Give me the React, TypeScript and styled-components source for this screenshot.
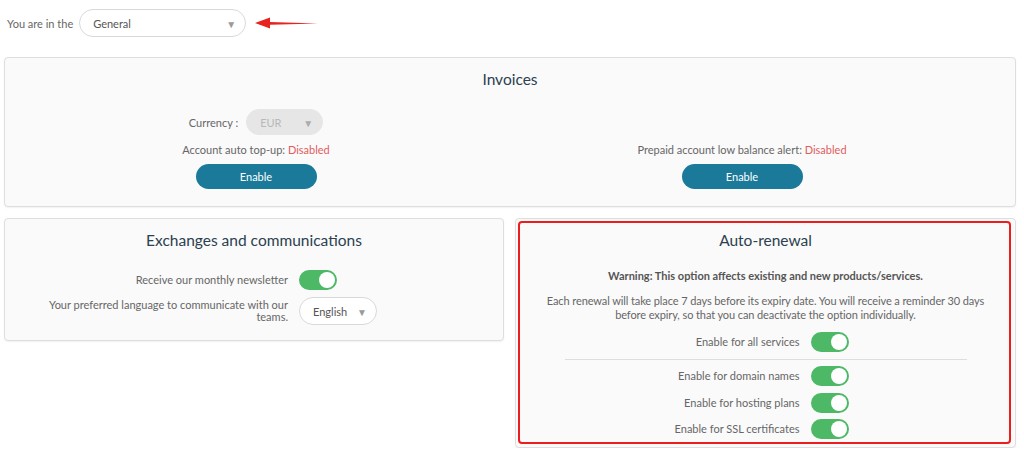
import React from 'react';
import styled, { createGlobalStyle } from 'styled-components';

const GlobalStyle = createGlobalStyle`
  body {
    margin: 0;
    background: #ffffff;
    font-family: Lato, 'Open Sans', sans-serif;
    font-size: 11px;
    color: #666666;
  }
`;

function Toggle({ on = true }: { on?: boolean }) {
  return (
    <S.Toggle $on={on}>
      <span className="knob" />
    </S.Toggle>
  );
}

function Select({ value, width, disabled }: { value: string; width: number; disabled?: boolean }) {
  return (
    <S.Select $width={width} $disabled={disabled}>
      <span>{value}</span>
      <span className="arrow">▼</span>
    </S.Select>
  );
}

function Arrow() {
  return (
    <svg width="66" height="14" viewBox="0 0 66 14">
      <path d="M64 7.4 L16 6.0 L16 1.6 L1 7 L16 12.4 L16 8.8 Z" fill="#e8231f" />
    </svg>
  );
}

export default function App() {
  return (
    <S.Page>
      <GlobalStyle />
      <S.TopBar>
        <span>You are in the</span>
        <Select value="General" width={167} />
        <Arrow />
      </S.TopBar>

      <S.Card $pb={17}>
        <S.Title>Invoices</S.Title>
        <S.InvoiceGrid>
          <S.Column>
            <S.Inline>
              <span>Currency :</span>
              <Select value="EUR" width={77} disabled />
            </S.Inline>
            <p>
              Account auto top-up: <S.Off>Disabled</S.Off>
            </p>
            <S.Button>Enable</S.Button>
          </S.Column>
          <S.Column>
            <p>
              Prepaid account low balance alert: <S.Off>Disabled</S.Off>
            </p>
            <S.Button>Enable</S.Button>
          </S.Column>
        </S.InvoiceGrid>
      </S.Card>

      <S.Bottom>
        <S.Card $pb={15}>
          <S.Title>Exchanges and communications</S.Title>
          <S.Rows $top={20} $gap={7}>
            <S.Row>
              <label>Receive our monthly newsletter</label>
              <Toggle />
            </S.Row>
            <S.Row>
              <label>Your preferred language to communicate with our teams.</label>
              <Select value="English" width={78} />
            </S.Row>
          </S.Rows>
        </S.Card>

        <S.Card $pb={8}>
          <S.Highlight />
          <S.Title>Auto-renewal</S.Title>
          <S.Warning>Warning: This option affects existing and new products/services.</S.Warning>
          <S.Text>
            Each renewal will take place 7 days before its expiry date. You will receive a reminder 30 days before
            expiry, so that you can deactivate the option individually.
          </S.Text>
          <S.Rows $top={10} $gap={6.5}>
            <S.Row>
              <label>Enable for all services</label>
              <Toggle />
            </S.Row>
            <S.Divider />
            <S.Row>
              <label>Enable for domain names</label>
              <Toggle />
            </S.Row>
            <S.Row>
              <label>Enable for hosting plans</label>
              <Toggle />
            </S.Row>
            <S.Row>
              <label>Enable for SSL certificates</label>
              <Toggle />
            </S.Row>
          </S.Rows>
        </S.Card>
      </S.Bottom>
    </S.Page>
  );
}

const S = {
  Page: styled.div`
    width: 1012px;
    padding: 9px 0 0 4px;
    display: flex;
    flex-direction: column;
  `,
  TopBar: styled.div`
    display: flex;
    align-items: center;
    gap: 6px;
    padding-left: 3px;
    height: 28px;
    margin-bottom: 20px;
    svg {
      margin-left: 2px;
    }
  `,
  Select: styled.div<{ $width: number; $disabled?: boolean }>`
    box-sizing: border-box;
    width: ${(p) => p.$width}px;
    height: ${(p) => (p.$disabled ? 26 : 28)}px;
    display: flex;
    align-items: center;
    justify-content: space-between;
    padding: 0 9px 0 13px;
    border-radius: 14px;
    border: 1px solid ${(p) => (p.$disabled ? '#e6e6e6' : '#d9d9d9')};
    background: ${(p) => (p.$disabled ? '#e6e6e6' : '#ffffff')};
    color: ${(p) => (p.$disabled ? '#b8b8b8' : '#555555')};
    .arrow {
      font-size: 10px;
      color: ${(p) => (p.$disabled ? '#acacac' : '#9a9a9a')};
      padding-top: 2px;
    }
  `,
  Card: styled.section<{ $pb: number }>`
    position: relative;
    box-sizing: border-box;
    background: #fafafa;
    border: 1px solid #dedede;
    border-radius: 4px;
    box-shadow: 0 1px 2px rgba(0, 0, 0, 0.06);
    display: flex;
    flex-direction: column;
    align-items: center;
    padding: 11px 0 ${(p) => p.$pb}px;
  `,
  Title: styled.h2`
    margin: 0;
    font-size: 15.5px;
    font-weight: 400;
    color: #2c4050;
    line-height: 20px;
  `,
  InvoiceGrid: styled.div`
    align-self: stretch;
    display: grid;
    grid-template-columns: 486px 486px;
    align-items: end;
    padding-left: 8px;
    margin-top: 20px;
  `,
  Column: styled.div`
    display: flex;
    flex-direction: column;
    align-items: center;
    p {
      margin: 8px 0 7px;
      line-height: 14px;
    }
  `,
  Inline: styled.div`
    display: flex;
    align-items: center;
    gap: 8px;
  `,
  Off: styled.span`
    color: #e25d5d;
  `,
  Button: styled.button`
    width: 121px;
    height: 25px;
    border: none;
    border-radius: 13px;
    background: #1b7a99;
    color: #ffffff;
    font-family: inherit;
    font-size: 11px;
    font-weight: 400;
  `,
  Bottom: styled.div`
    display: grid;
    grid-template-columns: 500px 501px;
    gap: 11px;
    align-items: start;
    margin-top: 11px;
  `,
  Rows: styled.div<{ $top: number; $gap: number }>`
    align-self: stretch;
    display: flex;
    flex-direction: column;
    gap: ${(p) => p.$gap}px;
    margin-top: ${(p) => p.$top}px;
  `,
  Row: styled.div`
    display: grid;
    grid-template-columns: calc(50% + 34px) 1fr;
    column-gap: 11px;
    align-items: center;
    label {
      justify-self: end;
      text-align: right;
      max-width: 250px;
      line-height: 12px;
    }
  `,
  Toggle: styled.span<{ $on: boolean }>`
    position: relative;
    display: block;
    width: 38px;
    height: 20px;
    border-radius: 10px;
    background: ${(p) => (p.$on ? '#4db866' : '#cccccc')};
    .knob {
      position: absolute;
      top: 2px;
      left: ${(p) => (p.$on ? 20 : 2)}px;
      width: 16px;
      height: 16px;
      border-radius: 50%;
      background: #ffffff;
    }
  `,
  Warning: styled.p`
    margin: 19px 0 0;
    font-weight: 700;
    color: #555555;
    line-height: 14px;
  `,
  Text: styled.p`
    margin: 11px 24px 0;
    text-align: center;
    line-height: 14px;
    letter-spacing: -0.1px;
  `,
  Divider: styled.hr`
    width: 402px;
    margin: 0 auto;
    border: none;
    border-top: 1px solid #dddddd;
  `,
  Highlight: styled.div`
    position: absolute;
    inset: 2px 4px 3px 2px;
    border: 2px solid #ee1d1d;
    border-radius: 4px;
    pointer-events: none;
  `,
};
